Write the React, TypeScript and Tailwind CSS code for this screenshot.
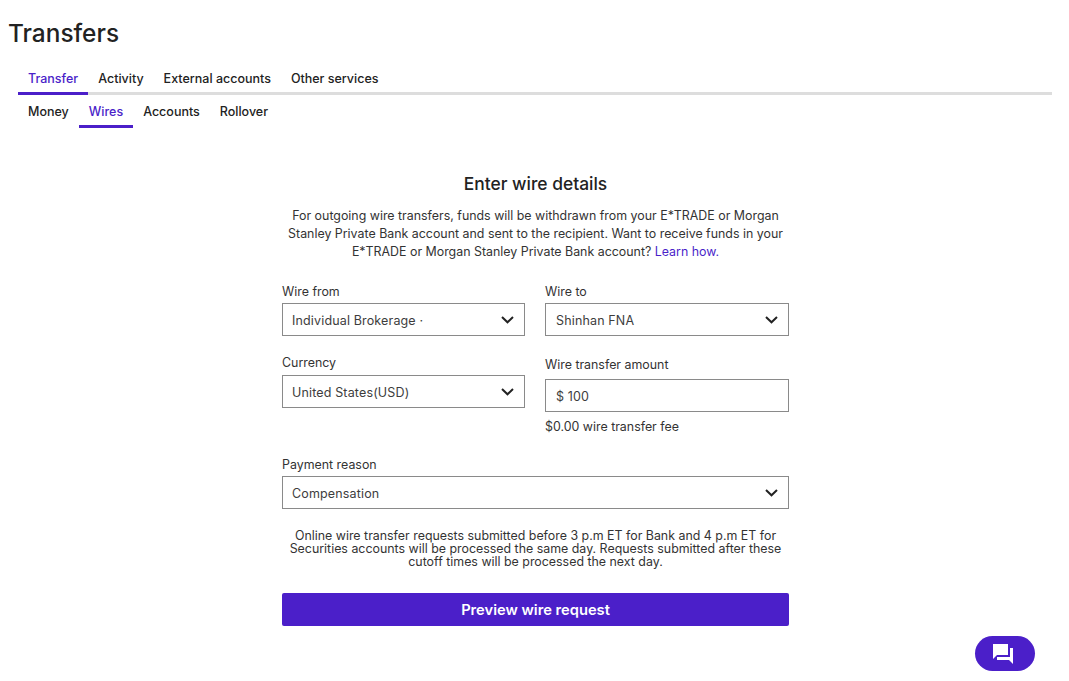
const TABS = ['Transfer', 'Activity', 'External accounts', 'Other services'];
const SUB_TABS = ['Money', 'Wires', 'Accounts', 'Rollover'];

function Chevron() {
  return (
    <svg width="13" height="8" viewBox="0 0 13 8" fill="none" className="shrink-0">
      <path d="M1 1l5.5 5.3L12 1" stroke="#222222" strokeWidth="2" />
    </svg>
  );
}

function SelectBox({ value, right }: { value: string; right?: boolean }) {
  return (
    <div
      className={`flex h-[33px] items-center justify-between border border-[#8a8a8a] pr-[10px] text-[12.5px] tracking-[0.15px] text-[#3d3d3d] ${
        right ? 'pl-[10px]' : 'pl-[9px]'
      }`}
    >
      <span className="pt-[4px]">{value}</span>
      <Chevron />
    </div>
  );
}

function Label({ children }: { children: string }) {
  return <p className="text-[12.4px] leading-[16px] text-[#333333]">{children}</p>;
}

export default function App() {
  return (
    <div className="relative h-[681px] w-[1069px] overflow-hidden bg-white font-['Inter',sans-serif] text-[#222222]">
      <h1 className="pl-[8px] pt-[17px] text-[24.4px] font-medium leading-[32px]">Transfers</h1>

      {/* Tabs */}
      <div className="ml-[18px] mr-[17px] mt-[19px] flex border-b-[3px] border-[#dddddd]">
        {TABS.map((t, i) => (
          <div
            key={t}
            className={`-mb-[3px] border-b-[3px] px-[10px] pb-[4px] pt-[2px] text-[12.5px] font-medium leading-[18px] ${
              i === 0 ? 'border-[#4b1fc9] text-[#4b1fc9]' : 'border-transparent'
            }`}
          >
            {t}
          </div>
        ))}
      </div>
      <div className="ml-[18px] mt-[6px] flex">
        {SUB_TABS.map((t, i) => (
          <div
            key={t}
            className={`border-b-[3px] px-[10px] pb-[4px] pt-[2px] text-[12.5px] font-medium leading-[18px] ${
              i === 1 ? 'border-[#4b1fc9] text-[#4b1fc9]' : 'border-transparent'
            }`}
          >
            {t}
          </div>
        ))}
      </div>

      {/* Form */}
      <div className="ml-[282px] mt-[44px] w-[507px]">
        <h2 className="text-center text-[17.4px] font-medium leading-[24px]">Enter wire details</h2>
        <p className="mt-[11px] whitespace-nowrap text-center text-[12.4px] leading-[18px] text-[#333333]">
          For outgoing wire transfers, funds will be withdrawn from your E*TRADE or Morgan
          <br />
          Stanley Private Bank account and sent to the recipient. Want to receive funds in your
          <br />
          E*TRADE or Morgan Stanley Private Bank account? <span className="text-[#4b1fc9]">Learn how.</span>
        </p>

        <div className="mt-[23px] grid grid-cols-[243px_244px] gap-x-[20px]">
          <div>
            <Label>Wire from</Label>
            <div className="mt-[3px]">
              <SelectBox value="Individual Brokerage ·" />
            </div>
            <div className="mt-[19px]">
              <Label>Currency</Label>
            </div>
            <div className="mt-[4px]">
              <SelectBox value="United States(USD)" />
            </div>
          </div>
          <div>
            <Label>Wire to</Label>
            <div className="mt-[3px]">
              <SelectBox value="Shinhan FNA" right />
            </div>
            <div className="mt-[21px]">
              <Label>Wire transfer amount</Label>
            </div>
            <div className="mt-[6px] flex h-[33px] items-center border border-[#8a8a8a] px-[10px] text-[12.5px] tracking-[0.15px] text-[#3d3d3d]">
              <span className="pt-[4px]">$ 100</span>
            </div>
            <p className="mt-[7px] text-[12.4px] leading-[16px] text-[#333333]">$0.00 wire transfer fee</p>
          </div>
        </div>

        <div className="mt-[22px]">
          <Label>Payment reason</Label>
          <div className="mt-[3px]">
            <SelectBox value="Compensation" />
          </div>
        </div>

        <p className="mt-[20px] whitespace-nowrap text-center text-[12.4px] leading-[13px] text-[#333333]">
          Online wire transfer requests submitted before 3 p.m ET for Bank and 4 p.m ET for
          <br />
          Securities accounts will be processed the same day. Requests submitted after these
          <br />
          cutoff times will be processed the next day.
        </p>

        <button className="mt-[25px] h-[33px] w-full rounded-[2px] bg-[#4b1fc9] pt-[2px] text-[14.7px] font-semibold text-white">
          Preview wire request
        </button>
      </div>

      {/* Chat */}
      <div className="absolute left-[975px] top-[636px] flex h-[35px] w-[60px] items-center justify-center rounded-full bg-[#4b1fc9] pr-[4px]">
        <svg width="24" height="24" viewBox="0 0 24 24" fill="#ffffff">
          <path d="M22 6h-3v9H6v3h12l4 4V6zm-5 7V2H2v15l4-4h11z" />
        </svg>
      </div>
    </div>
  );
}
